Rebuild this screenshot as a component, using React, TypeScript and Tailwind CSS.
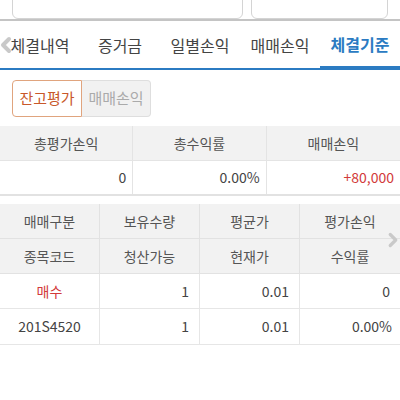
import { ChevronLeft, ChevronRight } from "lucide-react";

const FONT = { fontFamily: '"Noto Sans CJK KR", "Noto Sans", sans-serif' };

const TABS = ["체결내역", "증거금", "일별손익", "매매손익", "체결기준"];

const GRID_HEAD = [
  ["매매구분", "보유수량", "평균가", "평가손익"],
  ["종목코드", "청산가능", "현재가", "수익률"],
];

export default function App() {
  return (
    <div className="w-[400px] h-[400px] bg-white overflow-hidden relative text-[#333]" style={FONT}>
      {/* search inputs (cut off at the top) */}
      <div className="h-[19px] flex items-end gap-[8px] px-[12px] overflow-hidden">
        <div className="w-[231px] h-[30px] border border-[#d4d4d4] rounded-b-[6px] shrink-0" />
        <div className="w-[137px] h-[30px] border border-[#d4d4d4] rounded-b-[6px] shrink-0 mb-[0px]" />
      </div>
      <div className="h-[2px] bg-[#c4c4c4]" />

      {/* tabs */}
      <div className="relative h-[49px] border-b-[2px] border-[#2b7bc2] flex items-center">
        <ChevronLeft className="absolute left-[-6px] top-[12px] text-[#c9c9c9]" size={24} strokeWidth={4} />
        <div className="flex w-full text-[16px] leading-none">
          {TABS.map((t, i) => (
            <div
              key={t}
              className={
                i === 4
                  ? "w-[80px] h-[47px] flex items-center justify-center text-[#2b7bc2] font-bold border-b-[2px] border-[#2b7bc2] mb-[-2px]"
                  : i === 0
                  ? "w-[80px] h-[47px] flex items-center justify-center text-[#444] pr-[0px]"
                  : "w-[80px] h-[47px] flex items-center justify-center text-[#444]"
              }
            >
              {t}
            </div>
          ))}
        </div>
      </div>

      {/* toggle buttons */}
      <div className="px-[12px] pt-[10px] pb-[9px] flex">
        <div className="w-[70px] h-[37px] border border-[#e0a47e] rounded-l-[4px] flex items-center justify-center text-[15px] text-[#c8582a]">
          잔고평가
        </div>
        <div className="w-[69px] h-[37px] border border-l-0 border-[#dedede] bg-[#f1f1f1] rounded-r-[4px] flex items-center justify-center text-[15px] text-[#aaa]">
          매매손익
        </div>
      </div>

      {/* summary table */}
      <div className="border-b-[2px] border-[#e2e2e2]">
        <div className="grid grid-cols-3 h-[35px] bg-[#f2f2f2] text-[14px] text-[#555] border-b border-[#e4e4e4]">
          <div className="flex items-center justify-center border-r border-[#e4e4e4]">총평가손익</div>
          <div className="flex items-center justify-center border-r border-[#e4e4e4]">총수익률</div>
          <div className="flex items-center justify-center">매매손익</div>
        </div>
        <div className="grid grid-cols-3 h-[33px] text-[14px] text-[#444]">
          <div className="flex items-center justify-end pr-[6px] border-r border-[#e4e4e4]">0</div>
          <div className="flex items-center justify-end pr-[6px] border-r border-[#e4e4e4]">0.00%</div>
          <div className="flex items-center justify-end pr-[6px] text-[#d23a3a]">+80,000</div>
        </div>
      </div>

      {/* holdings table */}
      <div className="mt-[8px] relative">
        {GRID_HEAD.map((row, r) => (
          <div key={r} className="grid grid-cols-4 h-[35px] bg-[#f2f2f2] text-[14px] text-[#555] border-b border-[#e2e2e2]">
            {row.map((c, i) => (
              <div key={c} className={i < 3 ? "flex items-center justify-center border-r border-[#e2e2e2]" : "flex items-center justify-center"}>
                {c}
              </div>
            ))}
          </div>
        ))}
        <div className="grid grid-cols-4 h-[35px] text-[14px] text-[#444] border-b border-[#e6e6e6]">
          <div className="flex items-center justify-center border-r border-[#e6e6e6] text-[#d23a3a]">매수</div>
          <div className="flex items-center justify-end pr-[10px] border-r border-[#e6e6e6]">1</div>
          <div className="flex items-center justify-end pr-[10px] border-r border-[#e6e6e6]">0.01</div>
          <div className="flex items-center justify-end pr-[10px]">0</div>
        </div>
        <div className="grid grid-cols-4 h-[36px] text-[14px] text-[#444] border-b border-[#e6e6e6]">
          <div className="flex items-center justify-center border-r border-[#e6e6e6]">201S4520</div>
          <div className="flex items-center justify-end pr-[10px] border-r border-[#e6e6e6]">1</div>
          <div className="flex items-center justify-end pr-[10px] border-r border-[#e6e6e6]">0.01</div>
          <div className="flex items-center justify-end pr-[8px]">0.00%</div>
        </div>
        <ChevronRight className="absolute right-[-4px] top-[25px] text-[#c9c9c9]" size={22} strokeWidth={3.5} />
      </div>
    </div>
  );
}
